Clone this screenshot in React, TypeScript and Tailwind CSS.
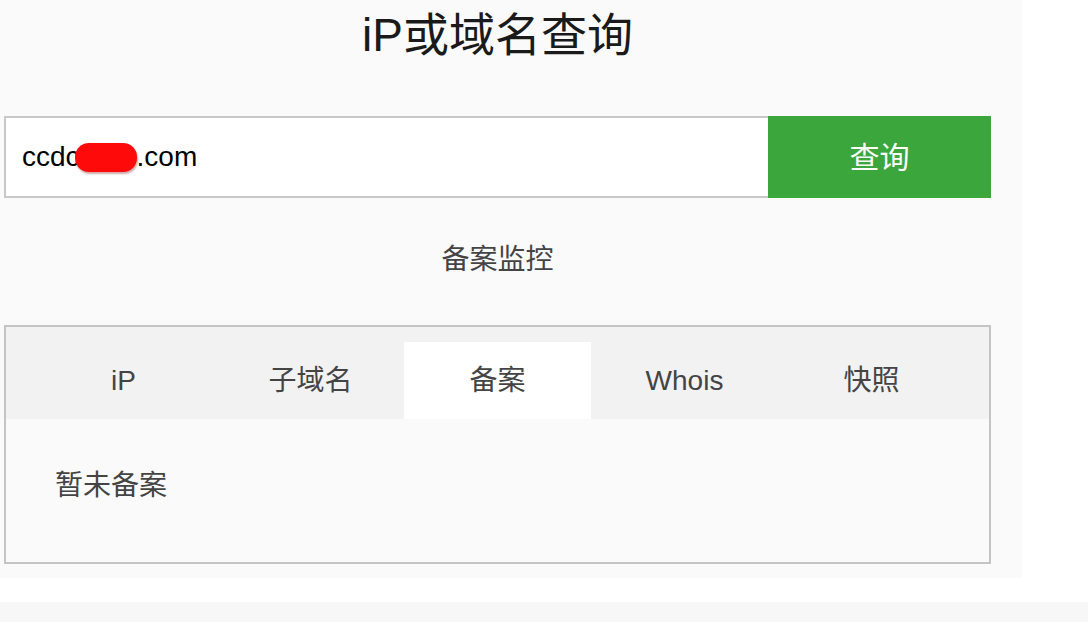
import React from 'react'

const tabs = ["iP", "子域名", "备案", "Whois", "快照"];

export default function App() {
  const active = "备案";
  return (
    <div className="w-[1088px] h-[622px] bg-white font-['Liberation_Sans','Noto_Sans_CJK_SC',sans-serif]">
      <div className="w-[1022px] h-[578px] bg-[#fafafa] pt-[12px]">
        <div className="ml-[4px] w-[987px]">
          <h1 className="text-center text-[46px] leading-[46px] text-[#1a1a1a]">iP或域名查询</h1>

          <div className="mt-[58px] flex h-[82px]">
            <div className="flex-1 bg-white border-2 border-r-0 border-[#c8c8c8] flex items-center pl-[16px] text-[28px] text-black">
              <span>ccdc</span>
              <span className="inline-block w-[62px] h-[29px] -ml-[5px] bg-[#ff0a0a] rounded-[14px] shadow-[1px_2px_2px_rgba(120,0,0,0.35)]"></span>
              <span>.com</span>
            </div>
            <button className="w-[223px] bg-[#3aa63c] text-white text-[30px] flex items-center justify-center">
              查询
            </button>
          </div>

          <p className="mt-[48px] text-center text-[28px] leading-[28px] text-[#444]">备案监控</p>

          <div className="mt-[51px] h-[239px] border-2 border-[#c4c4c4]">
            <div className="h-[92px] bg-[#f2f2f2] px-[24px] pt-[15px] flex">
              {tabs.map((t) => (
                <div
                  key={t}
                  className={
                    t === active
                      ? "w-[187px] h-[77px] bg-white flex items-center justify-center text-[28px] text-[#444]"
                      : "w-[187px] h-[77px] flex items-center justify-center text-[28px] text-[#444]"
                  }
                >
                  {t}
                </div>
              ))}
            </div>
            <div className="pl-[49px] pt-[53px]">
              <p className="text-[28px] leading-[28px] text-[#444]">暂未备案</p>
            </div>
          </div>
        </div>
      </div>
      <div className="mt-[24px] h-[20px] bg-[#f7f7f7]"></div>
    </div>
  )
}
